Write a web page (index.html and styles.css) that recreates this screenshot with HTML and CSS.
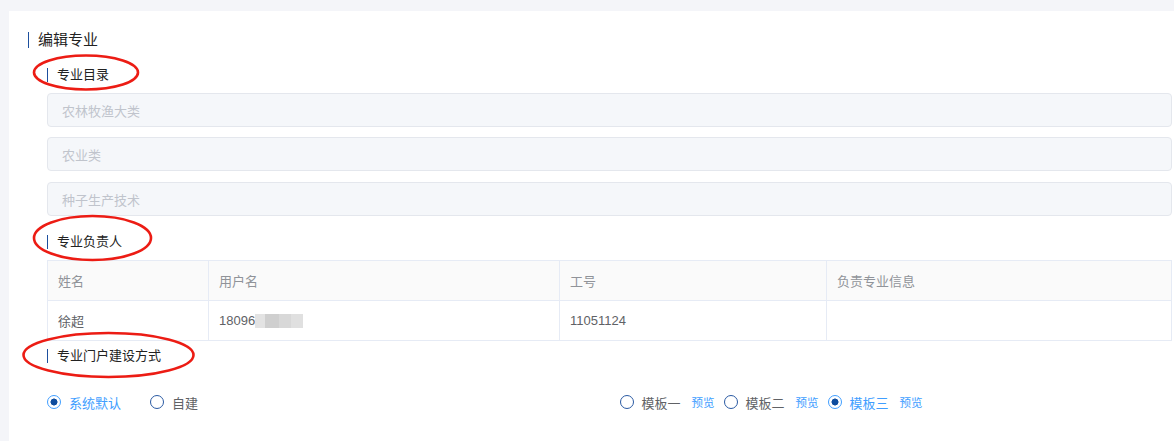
FILE: index.html
```html
<!DOCTYPE html>
<html lang="zh">
<head>
<meta charset="utf-8">
<title>编辑专业</title>
<link rel="stylesheet" href="styles.css">
</head>
<body>
<div class="panel">
  <div class="title">编辑专业</div>
  <div class="section">
    <div class="sub sub-first">专业目录</div>
    <div class="field">农林牧渔大类</div>
    <div class="field f2">农业类</div>
    <div class="field f3">种子生产技术</div>

    <div class="sub sub-second">专业负责人</div>
    <table class="tbl">
      <colgroup>
        <col class="c1"><col class="c2"><col class="c3"><col class="c4">
      </colgroup>
      <thead>
        <tr><th>姓名</th><th>用户名</th><th>工号</th><th>负责专业信息</th></tr>
      </thead>
      <tbody>
        <tr>
          <td>徐超</td>
          <td class="num">18096<span class="blur"><i class="b1"></i><i class="b2"></i><i class="b3"></i><i class="b4"></i></span></td>
          <td class="num">11051124</td>
          <td></td>
        </tr>
      </tbody>
    </table>

    <div class="sub sub-third">专业门户建设方式</div>
    <div class="radios">
      <div class="group">
        <label class="radio checked"><span class="dot"></span><span class="txt">系统默认</span></label>
        <label class="radio"><span class="dot"></span><span class="txt">自建</span></label>
      </div>
      <div class="group right">
        <label class="radio tpl"><span class="dot"></span><span class="txt">模板一</span></label><a class="preview">预览</a>
        <label class="radio tpl"><span class="dot"></span><span class="txt">模板二</span></label><a class="preview">预览</a>
        <label class="radio tpl checked"><span class="dot"></span><span class="txt">模板三</span></label><a class="preview">预览</a>
      </div>
    </div>
  </div>
</div>
<svg class="marks" width="1174" height="441" viewBox="0 0 1174 441">
  <ellipse cx="86" cy="72.5" rx="52" ry="17" />
  <ellipse cx="92.5" cy="238" rx="58.5" ry="22" />
  <ellipse cx="108.5" cy="355" rx="85" ry="22" />
</svg>
</body>
</html>
```

FILE: styles.css
```css
html, body {
  margin: 0;
  padding: 0;
}
body {
  background: #f4f5f9;
  font-family: "Liberation Sans", "Noto Sans CJK SC", sans-serif;
  color: #303133;
  width: 1174px;
  height: 441px;
  overflow: hidden;
  position: relative;
}
.panel {
  margin: 11px 0 0 9px;
  background: #fff;
  height: 430px;
  box-sizing: border-box;
  padding: 21px 2px 0 19px;
}
.title {
  height: 16px;
  line-height: 16px;
  border-left: 1px solid #1d4f9e;
  padding-left: 9px;
  font-size: 15px;
  color: #222;
}
.section {
  margin-left: 19px;
}
.sub {
  height: 14px;
  line-height: 14px;
  border-left: 1px solid #1d4f9e;
  padding-left: 9px;
  font-size: 13px;
  color: #222;
}
.sub-first { margin-top: 20px; margin-bottom: 11px; }
.sub-second { margin-top: 19px; margin-bottom: 11px; }
.sub-third { margin-top: 8px; }
.field {
  height: 34px;
  box-sizing: border-box;
  border: 1px solid #e4e7ed;
  border-radius: 4px;
  background: #f5f7fa;
  color: #c0c4cc;
  font-size: 13px;
  padding-left: 14px;
  display: flex;
  align-items: center;
}
.f2 { margin-top: 10px; }
.f3 { margin-top: 11px; }
.tbl {
  width: 100%;
  border-collapse: collapse;
  table-layout: fixed;
  font-size: 13px;
}
.tbl .c1 { width: 161px; }
.tbl .c2 { width: 351px; }
.tbl .c3 { width: 267px; }
.tbl th, .tbl td {
  border: 1px solid #e6ebf5;
  height: 39px;
  padding: 0 10px;
  text-align: left;
  font-weight: normal;
}
.tbl th {
  background: #fafafa;
  color: #909399;
}
.tbl td {
  color: #606266;
}
.blur {
  display: inline-flex;
  vertical-align: -3px;
}
.blur i {
  display: block;
  height: 14px;
}
.b1 { width: 10px; background: #e3e3e3; }
.b2 { width: 14px; background: #cfcfcf; }
.b3 { width: 12px; background: #d8d8d8; }
.b4 { width: 12px; background: #e0e0e0; }
.radios {
  margin-top: 29px;
  display: grid;
  grid-template-columns: 1fr 1fr;
  height: 20px;
}
.group {
  display: flex;
  align-items: center;
}
.group.right {
  padding-left: 10px;
}
.radio {
  display: inline-flex;
  align-items: center;
  font-size: 13px;
  color: #606266;
  margin-right: 29px;
}
.radio .dot {
  width: 14px;
  height: 14px;
  box-sizing: border-box;
  border-radius: 50%;
  border: 1px solid #2a5aa3;
  background: #fff;
}
.radio.checked .dot {
  border-color: #409eff;
  background: radial-gradient(circle, #0f4d9e 0, #0f4d9e 3.2px, #fff 3.8px);
}
.radio .txt {
  margin-left: 8px;
}
.radio.checked .txt {
  color: #409eff;
}
.radio.tpl {
  margin-right: 11px;
}
.preview {
  font-size: 11.5px;
  color: #409eff;
  margin-right: 9px;
  cursor: pointer;
}
.marks {
  position: absolute;
  top: 0;
  left: 0;
  pointer-events: none;
}
.marks ellipse {
  fill: none;
  stroke: #ec1c14;
  stroke-width: 2.6;
}
```
